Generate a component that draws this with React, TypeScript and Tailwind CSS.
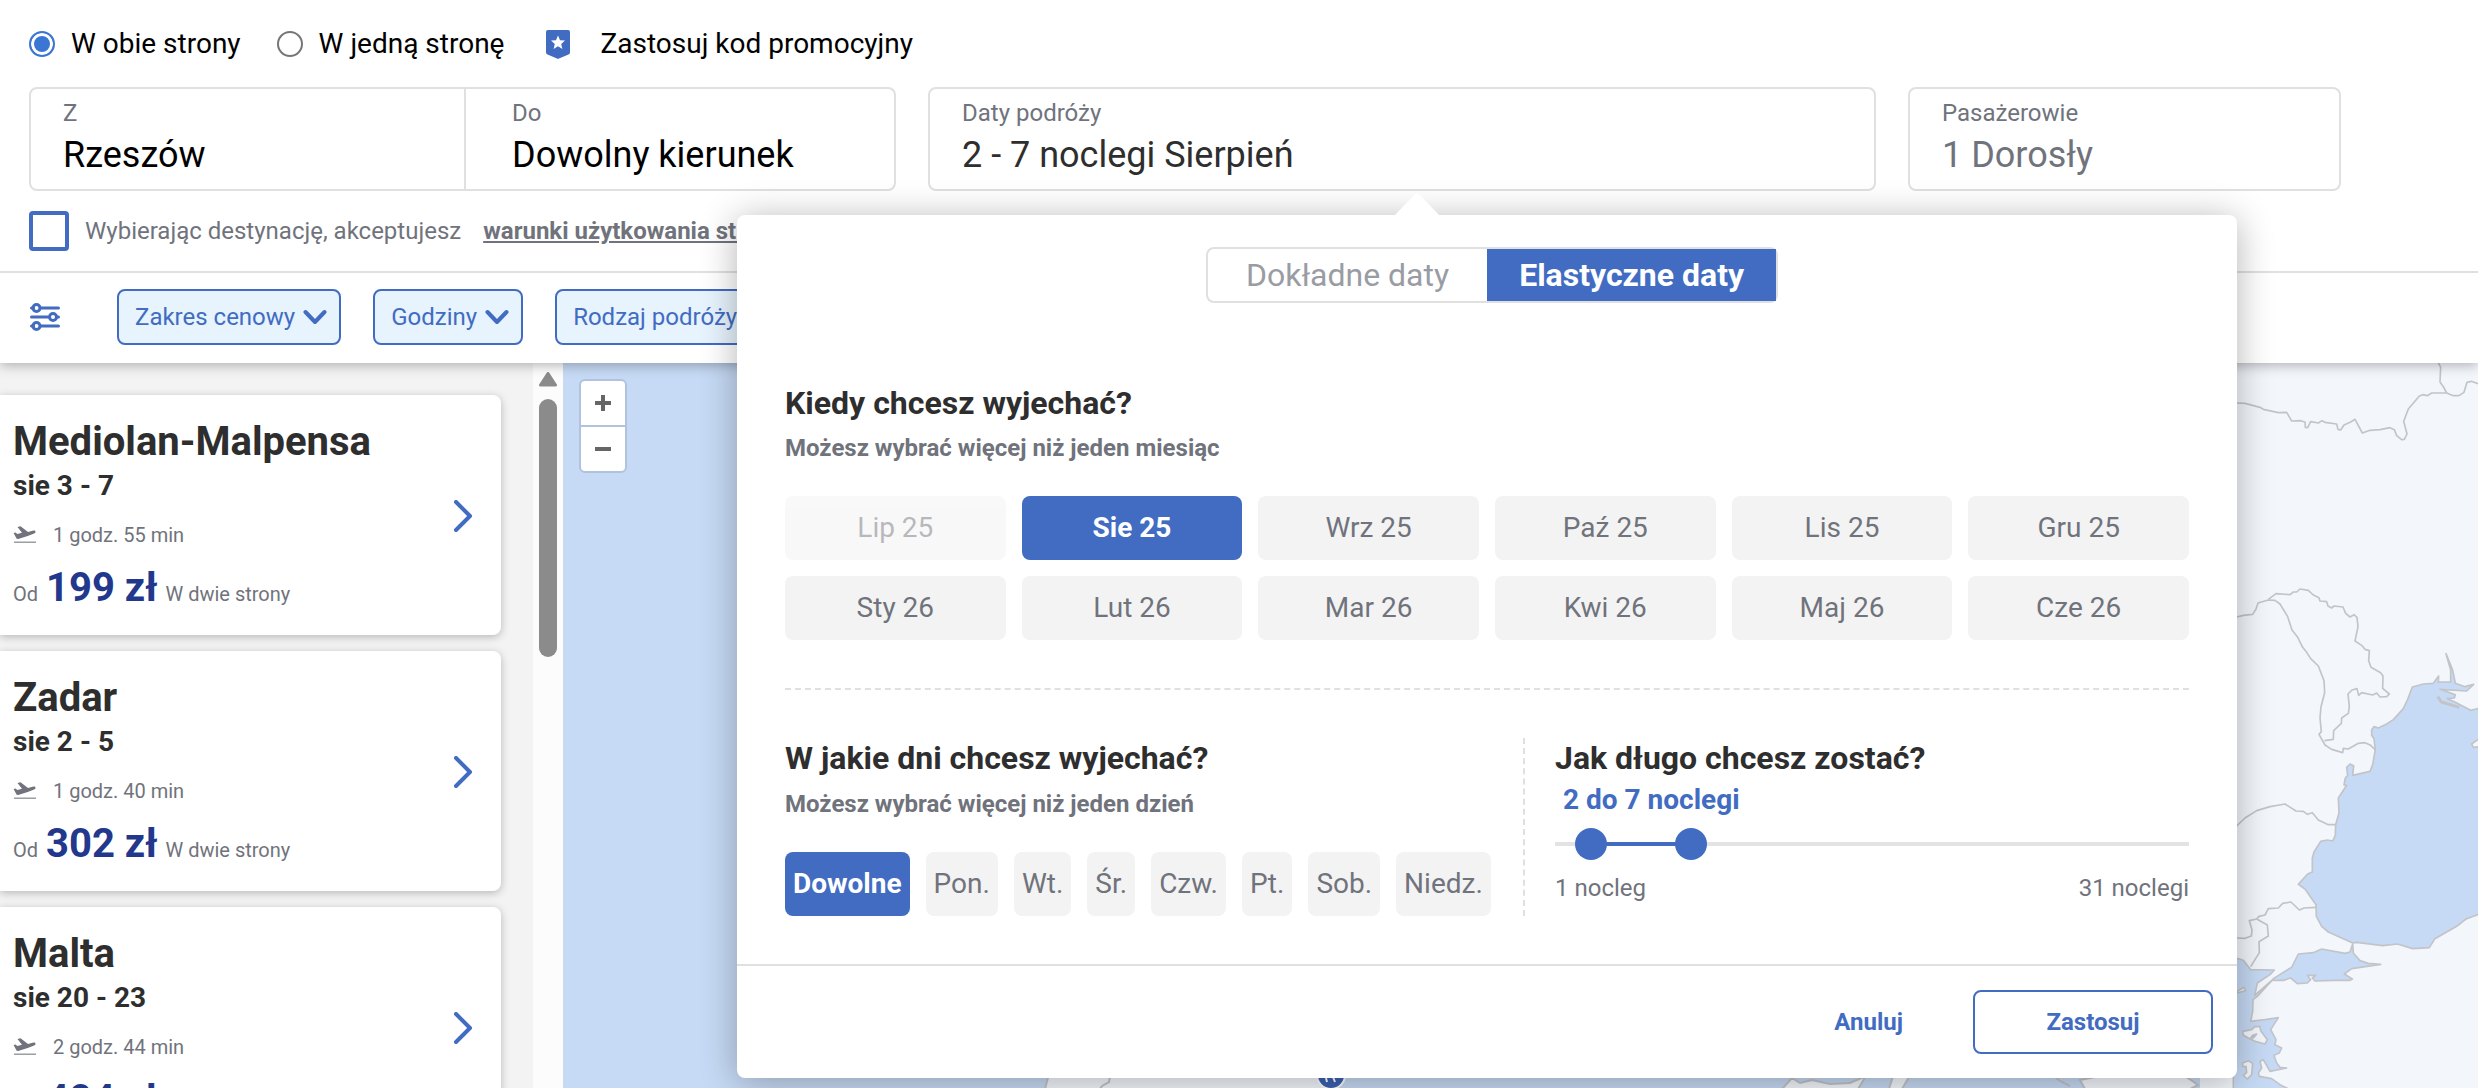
import { useState } from 'react'
import type { ReactNode } from 'react'

const MONTHS = ['Lip 25', 'Sie 25', 'Wrz 25', 'Paź 25', 'Lis 25', 'Gru 25', 'Sty 26', 'Lut 26', 'Mar 26', 'Kwi 26', 'Maj 26', 'Cze 26']
const DAYS = ['Dowolne', 'Pon.', 'Wt.', 'Śr.', 'Czw.', 'Pt.', 'Sob.', 'Niedz.']
const MIN_NIGHTS = 1
const MAX_NIGHTS = 31

type Trip = {
  city: string
  dates: string
  duration: string
  price: string
}

const TRIPS: Trip[] = [
  { city: 'Mediolan-Malpensa', dates: 'sie 3 - 7', duration: '1 godz. 55 min', price: '199 zł' },
  { city: 'Zadar', dates: 'sie 2 - 5', duration: '1 godz. 40 min', price: '302 zł' },
  { city: 'Malta', dates: 'sie 20 - 23', duration: '2 godz. 44 min', price: '404 zł' },
]

function PromoIcon() {
  return (
    <svg viewBox="0 0 24 29" className="h-[29px] w-6" aria-hidden="true">
      <path d="M2 0h20a2 2 0 0 1 2 2v20.500q0 1.500-1.500 2L13 28.600q-1 .4-2 0l-9.500-4.100Q0 24 0 22.500V2a2 2 0 0 1 2-2z" fill="#416cc2" />
      <path d="M12 5.500l2 4.700 5 .4-3.800 3.300 1.200 5L12 16.200l-4.400 2.700 1.200-5L5 10.600l5-.4z" fill="#fff" />
    </svg>
  )
}

function SlidersIcon() {
  return (
    <svg viewBox="0 0 30 28" className="h-7 w-[30px]" fill="none" stroke="#416cc2" strokeWidth="3" strokeLinecap="round" aria-hidden="true">
      <path d="M1.500 5h2M11 5h17.500M1.500 14h16.500M27 14h1.500M1.500 23h2M11 23h17.500" />
      <circle cx="6.500" cy="5" r="3.500" />
      <circle cx="23" cy="14" r="3.500" />
      <circle cx="6.500" cy="23" r="3.500" />
    </svg>
  )
}

function TakeoffIcon() {
  return (
    <svg viewBox="0 0 24 24" className="size-6" fill="currentColor" aria-hidden="true">
      <path d="M22.570 8.640c-.3-.9-1.200-1.300-2-1.100L15 9 7.500 3.300l-3 .6L9 9.800l-4.600 1.200-2-1.500-1.800.4 2.900 5.600q.6.700 1.700.4 9-2.200 16-5.300 1.700-.8 1.400-2z" />
      <path d="M1 18.500h22V20H1z" opacity="0.700" />
    </svg>
  )
}

function FilterButton({ children }: { children: ReactNode }) {
  return (
    <button className="flex h-14 items-center gap-2 rounded-lg border-2 border-[#416cc2] bg-[#e7f3fd] pr-3 pl-4 text-2xl whitespace-nowrap text-[#416cc2]">
      {children}
      <svg viewBox="0 0 24 16" className="h-4 w-6" fill="none" stroke="#416cc2" strokeWidth="4" strokeLinecap="round" strokeLinejoin="round" aria-hidden="true">
        <path d="M2.500 3L12 13l9.500-10" />
      </svg>
    </button>
  )
}

function TextField({ id, label, value, className }: { id: string; label: string; value: string; className: string }) {
  return (
    <div className={`min-w-0 pt-2 pb-2.5 ${className}`}>
      <label htmlFor={id} className="block text-2xl leading-8 text-[#70737c]">
        {label}
      </label>
      <input id={id} defaultValue={value} className="mt-0.5 block h-12 w-full bg-transparent text-4xl text-inherit outline-none" />
    </div>
  )
}

function TripCard({ trip }: { trip: Trip }) {
  return (
    <a href="#trip" className="flex items-center justify-between rounded-r-lg bg-white pt-6 pr-7 pb-[22px] pl-[13px] shadow-[0_2px_8px_rgba(0,0,0,0.25)]">
      <div>
        <h2 className="text-[40px] leading-[46px] font-bold text-[#2e2e2e]">{trip.city}</h2>
        <p className="text-[28px] leading-[42px] font-bold text-[#2e2e2e]">{trip.dates}</p>
        <p className="mt-4 flex items-center gap-4 text-xl leading-6 text-[#70737c]">
          <TakeoffIcon />
          {trip.duration}
        </p>
        <p className="mt-4 flex items-baseline gap-2 text-xl text-[#70737c]">
          Od
          <strong className="text-[40px] leading-[50px] font-bold text-[#22388c]">{trip.price}</strong>
          W dwie strony
        </p>
      </div>
      <svg viewBox="0 0 20 32" className="h-8 w-5" fill="none" stroke="#416cc2" strokeWidth="4" strokeLinecap="round" strokeLinejoin="round" aria-hidden="true">
        <path d="M3 2l14 14L3 30" />
      </svg>
    </a>
  )
}

function MapCanvas() {
  return (
    <svg viewBox="563 363 1915 725" preserveAspectRatio="xMaxYMin slice" className="absolute inset-0 h-full w-full bg-[#c6daf5]" aria-hidden="true">
      <rect x="2200" y="363" width="278" height="725" fill="#f3f7fc" />
      <g fill="#f3f7fc" stroke="#c2c4c8" strokeWidth="2">
        <path d="M1050 1070L1045 1089H1325L1330 1070Z" />
        <path d="M1111 1070L1109 1082L1102 1086L1100 1089" fill="none" />
        <path d="M1782 1089L1792 1078L1800 1083L1812 1080L1830 1084L1850 1083L1866 1076L1858 1089Z" />
        <path d="M1893 1076L1889 1089H1902L1909 1077Z" />
        <path d="M2056 1078L2062 1082L2070 1086M2085 1089L2080 1080L2100 1076H2185L2198 1085L2190 1089Z" />
      </g>
      <circle cx="1331" cy="1075" r="14" fill="#3c62b4" stroke="#fff" strokeWidth="2" />
      <path d="M1326 1078l1 4M1333 1077l2 5" stroke="#fff" strokeWidth="2" />
      <g transform="translate(2220 350) scale(0.333333)" stroke="#c2c4c8" strokeWidth="5" strokeLinejoin="round" fill="none">
        {/* borders */}
        <path d="M50 159L75 160L120 172L130 178L175 188L200 187L215 213L240 212L255 216L256 232L263 233L272 215L295 219L306 212L315 217L350 222L354 238L362 240L372 225L392 216L405 208L427 249L450 241L480 239L510 233L523 239L530 257L545 269L553 268L561 252L551 214L565 177L598 138L609 134L622 137L635 129L680 129L700 137H717L732 127L741 97L754 94L774 101" />
        <path d="M654 36L662 52L660 96L670 110L680 129" />
        <path d="M50 801L70 796L98 793L108 777L114 759L145 750L165 751L180 762L203 800L216 840L232 860L248 892L260 907L272 926L295 948L312 992L314 1028L303 1070L300 1104L304 1145L297 1153L315 1185L335 1198L368 1208L370 1195L385 1197L415 1180L435 1178L452 1186L466 1200" />
        <path d="M145 748L168 731L210 734L220 726L230 726L240 717L265 721L280 735L297 743L300 753L320 755L324 768L335 774L342 768L369 771L377 790L390 801L402 794L411 802L414 830L405 873L425 886L435 898L448 902L446 932L453 952L482 968L489 978L488 1015L508 1032L500 1040L480 1041L470 1029L458 1035L425 1028L416 1036L411 1016L396 1020L384 1032L388 1070L385 1090L365 1104L364 1120L341 1142L340 1168L313 1172" />
        <path d="M50 1428L75 1404L110 1382L150 1370L195 1362L228 1383L250 1384L262 1393L277 1388L295 1410L325 1424H347" />
        <path d="M50 1764L75 1765L94 1758L96 1740L88 1712L110 1707L117 1699L135 1695L145 1676L175 1674L188 1660L213 1656L238 1680L252 1674L288 1672" />
        <path d="M110 1707L142 1725L145 1758L117 1775L118 1808L92 1850" />
        {/* Black Sea */}
        <path
          fill="#c6daf5"
          d="M780 1074L752 1081L703 1055L682 1046L703 1044L706 1034L690 1028L660 1018L740 1023L761 1003L735 1010L706 1000L698 960L678 911L692 960V996L655 996L656 978L640 1000L610 1002L577 1011L563 1048L550 1076L520 1109L500 1122L475 1134L462 1130L455 1139V1156L462 1166L466 1199L458 1244L450 1264L398 1276L401 1247L390 1242L380 1252L383 1276L376 1284L372 1305L380 1306L355 1344L357 1389L347 1424L346 1456L338 1473L322 1470L302 1474L282 1506L277 1524V1566L263 1572L235 1603L255 1617L288 1664L289 1699L305 1729L325 1746L398 1779L410 1777L488 1787L532 1782L578 1796L628 1793L645 1766L710 1729L738 1707L780 1692Z"
        />
        <path d="M653 1040L664 1056L718 1072" strokeWidth="9" />
        <path fill="#f3f7fc" d="M780 1164L755 1182L760 1192L780 1190" />
        {/* Marmara and Aegean */}
        <g transform="translate(0 1104)" fill="#c6daf5">
          <path d="M160 782L215 748L235 708L280 704L305 693L375 706L390 702L398 678L400 705L420 728L445 736L482 739L395 752L373 768L397 783L390 787H345L285 789L277 780L287 772L262 772L272 785L262 795L232 797L212 780L190 787H158Z" />
          <path d="M40 722H55L70 727L92 755L163 756L150 770L112 795L104 832L158 785L112 835L99 845L98 880L92 910L135 905L175 899L152 935L168 965L165 980L185 990L178 1005L162 1012L170 1035L180 1048L200 1050L150 1060L130 1025L120 1030L125 1050L115 1065L118 1075L155 1082L180 1100L212 1116H40Z" />
          <g fill="#f3f7fc">
            <path d="M52 820L72 808L77 818L52 825Z" />
            <path d="M68 940L95 935L105 925L120 926L122 938L142 965L135 978L105 970L85 960L70 952Z" />
            <path d="M92 960L98 952L110 948L100 960Z" fill="#c2c4c8" />
            <path d="M68 1035L85 1028L98 1036L95 1070L82 1083L70 1072L80 1064L78 1046L68 1045Z" />
          </g>
        </g>
      </g>
    </svg>
  )
}

function NightsSlider() {
  const [from, setFrom] = useState(2)
  const [to, setTo] = useState(7)
  const pos = (n: number) => ((n - MIN_NIGHTS) / (MAX_NIGHTS - MIN_NIGHTS)) * 100
  const rangeClass =
    'pointer-events-none absolute inset-0 h-8 w-full appearance-none bg-transparent [&::-webkit-slider-thumb]:pointer-events-auto [&::-webkit-slider-thumb]:size-8 [&::-webkit-slider-thumb]:appearance-none [&::-webkit-slider-thumb]:rounded-full [&::-webkit-slider-thumb]:bg-[#416cc2]'

  return (
    <div>
      <output className="mt-1.5 block pl-2 text-[28px] leading-8 font-bold text-[#416cc2]">
        {from} do {to} noclegi
      </output>
      <div className="relative mt-3 flex h-8 items-center bg-[linear-gradient(#e3e3e3,#e3e3e3)] bg-[length:100%_4px] bg-center bg-no-repeat px-4">
        <div className="h-1 w-full">
          <div className="h-full bg-[#416cc2]" style={{ marginLeft: `${pos(from)}%`, width: `${pos(to) - pos(from)}%` }} />
        </div>
        <input
          type="range"
          aria-label="Minimalna liczba noclegów"
          min={MIN_NIGHTS}
          max={MAX_NIGHTS}
          value={from}
          onChange={(e) => setFrom(Math.min(Number(e.target.value), to))}
          className={rangeClass}
        />
        <input
          type="range"
          aria-label="Maksymalna liczba noclegów"
          min={MIN_NIGHTS}
          max={MAX_NIGHTS}
          value={to}
          onChange={(e) => setTo(Math.max(Number(e.target.value), from))}
          className={rangeClass}
        />
      </div>
      <div className="mt-3 flex justify-between text-2xl leading-8 text-[#70737c]">
        <span>1 nocleg</span>
        <span>31 noclegi</span>
      </div>
    </div>
  )
}

function DatesPopup() {
  const [months, setMonths] = useState(['Sie 25'])
  const [day, setDay] = useState('Dowolne')

  function toggleMonth(month: string) {
    setMonths((prev) => (prev.includes(month) ? prev.filter((m) => m !== month) : [...prev, month]))
  }

  return (
    <div className="absolute top-[126px] -left-[193px] z-20 w-[1500px] rounded-lg bg-white shadow-[0_4px_36px_rgba(0,0,0,0.3)]">
      <svg viewBox="0 0 46 24" className="absolute -top-[23px] left-[657px] h-6 w-[46px]" aria-hidden="true">
        <path d="M0 24L20 3Q23 0 26 3L46 24Z" fill="#fff" />
      </svg>
      <div className="px-12 pt-8 pb-12">
        <div className="flex justify-center pl-2.5">
          <div className="flex h-14 rounded-lg border-2 border-[#e0e0e0] text-[32px]">
            <button className="px-[38px] text-[#9a9ca4]">Dokładne daty</button>
            <button className="bg-[#416cc2] px-8 font-bold text-white">Elastyczne daty</button>
          </div>
        </div>

        <h3 className="mt-20 text-[32px] leading-10 font-bold text-[#2e2e2e]">Kiedy chcesz wyjechać?</h3>
        <p className="mt-[9px] text-2xl leading-8 font-bold text-[#70737c]">Możesz wybrać więcej niż jeden miesiąc</p>
        <div className="mt-8 grid grid-cols-6 gap-4">
          {MONTHS.map((month, i) => (
            <button
              key={month}
              disabled={i === 0}
              onClick={() => toggleMonth(month)}
              className={
                months.includes(month)
                  ? 'h-16 rounded-lg bg-[#416cc2] text-[28px] font-bold text-white'
                  : 'h-16 rounded-lg bg-[#f3f3f3] text-[28px] text-[#70737c] disabled:opacity-50'
              }
            >
              {month}
            </button>
          ))}
        </div>

        <div className="mt-12 flex border-t-2 border-dashed border-[#e0e0e0] pt-12">
          <div className="w-[738px]">
            <h3 className="text-[32px] leading-10 font-bold text-[#2e2e2e]">W jakie dni chcesz wyjechać?</h3>
            <p className="mt-2.5 text-2xl leading-8 font-bold text-[#70737c]">Możesz wybrać więcej niż jeden dzień</p>
            <div className="mt-8 flex gap-4">
              {DAYS.map((d) => (
                <button
                  key={d}
                  onClick={() => setDay(d)}
                  className={
                    d === day
                      ? 'h-16 rounded-lg bg-[#416cc2] px-2 text-[28px] font-bold text-white'
                      : 'h-16 rounded-lg bg-[#f3f3f3] px-2 text-[28px] text-[#70737c]'
                  }
                >
                  {d}
                </button>
              ))}
            </div>
          </div>
          <div className="flex-1 border-l-2 border-dashed border-[#e0e0e0] pl-[30px]">
            <h3 className="text-[32px] leading-10 font-bold text-[#2e2e2e]">Jak długo chcesz zostać?</h3>
            <NightsSlider />
          </div>
        </div>
      </div>
      <div className="flex justify-end gap-12 border-t-2 border-[#e0e0e0] p-6 text-2xl font-bold text-[#416cc2]">
        <button className="px-[22px]">Anuluj</button>
        <button className="h-16 w-60 rounded-lg border-2 border-[#416cc2]">Zastosuj</button>
      </div>
    </div>
  )
}

function SearchHeader() {
  const [trip, setTrip] = useState('round')
  const radioClass =
    'size-[26px] appearance-none rounded-full border-2 border-[#767676] checked:border-[#3b76d4] checked:bg-[#3b76d4] checked:shadow-[inset_0_0_0_3px_#fff]'

  return (
    <header className="relative z-10 bg-white shadow-[0_2px_12px_rgba(0,0,0,0.3)]">
      <div className="border-b-2 border-[#e0e0e0] pt-7 pr-[137px] pb-5 pl-[29px]">
        <div className="flex h-8 items-center text-[28px] text-black">
          <input id="round" type="radio" name="trip" checked={trip === 'round'} onChange={() => setTrip('round')} className={radioClass} />
          <label htmlFor="round" className="pr-9 pl-4">
            W obie strony
          </label>
          <input id="oneway" type="radio" name="trip" checked={trip === 'oneway'} onChange={() => setTrip('oneway')} className={radioClass} />
          <label htmlFor="oneway" className="pr-[42px] pl-4">
            W jedną stronę
          </label>
          <button className="flex items-center gap-[30px]">
            <PromoIcon />
            Zastosuj kod promocyjny
          </button>
        </div>

        <div className="mt-[27px] grid grid-cols-[867fr_948fr_433fr] gap-8">
          <div className="grid grid-cols-[435fr_428fr] rounded-lg border-2 border-[#e0e0e0] text-black">
            <TextField id="from" label="Z" value="Rzeszów" className="border-r-2 border-[#e0e0e0] pl-8" />
            <TextField id="to" label="Do" value="Dowolny kierunek" className="pl-[46px]" />
          </div>
          <div className="relative rounded-lg border-2 border-[#e0e0e0] text-[#2e2e2e]">
            <TextField id="dates" label="Daty podróży" value="2 - 7 noclegi Sierpień" className="pl-8" />
            <DatesPopup />
          </div>
          <div className="rounded-lg border-2 border-[#e0e0e0] text-[#70737c]">
            <TextField id="passengers" label="Pasażerowie" value="1 Dorosły" className="pl-8" />
          </div>
        </div>

        <div className="mt-5 flex h-10 items-center text-2xl text-[#70737c]">
          <input id="terms" type="checkbox" className="size-10 appearance-none rounded border-4 border-[#416cc2] checked:bg-[#416cc2]" />
          <label htmlFor="terms" className="pr-[22px] pl-4">
            Wybierając destynację, akceptujesz
          </label>
          <a href="#terms" className="font-bold underline">
            warunki użytkowania strony
          </a>
        </div>
      </div>

      <div className="flex items-center gap-8 pt-4 pb-[18px] pl-[30px]">
        <button aria-label="Filtry" className="mr-[25px]">
          <SlidersIcon />
        </button>
        <FilterButton>Zakres cenowy</FilterButton>
        <FilterButton>Godziny</FilterButton>
        <FilterButton>Rodzaj podróży</FilterButton>
      </div>
    </header>
  )
}

export default function App() {
  return (
    <div className="flex h-screen flex-col overflow-hidden bg-white font-['Roboto',sans-serif]">
      <SearchHeader />
      <main className="flex min-h-0 flex-1">
        <aside className="flex w-[563px] shrink-0 overflow-hidden bg-[#f3f3f3]">
          <div className="flex flex-1 flex-col gap-4 pt-8 pr-8">
            {TRIPS.map((trip) => (
              <TripCard key={trip.city} trip={trip} />
            ))}
          </div>
          <div className="flex w-[30px] flex-col items-center gap-3 bg-[#fcfcfc] pt-2">
            <svg viewBox="0 0 18 16" className="h-4 w-[18px]" aria-hidden="true">
              <path d="M9 2.500L16.500 14H1.500Z" fill="#8b8b8b" stroke="#8b8b8b" strokeWidth="3" strokeLinejoin="round" />
            </svg>
            <div className="h-[258px] w-[18px] rounded-full bg-[#8b8b8b]" />
          </div>
        </aside>
        <section className="relative flex-1 overflow-hidden">
          <MapCanvas />
          <div className="absolute top-4 left-4 flex flex-col gap-0.5 rounded-md border-2 border-[#b0c2dd] bg-[#b0c2dd] text-[#666666]">
            <button aria-label="Przybliż" className="flex h-11 w-11 items-center justify-center rounded-t bg-white">
              <svg viewBox="0 0 16 16" className="size-4" aria-hidden="true">
                <path d="M8 0v16M0 8h16" stroke="currentColor" strokeWidth="4" />
              </svg>
            </button>
            <button aria-label="Oddal" className="flex h-11 w-11 items-center justify-center rounded-b bg-white">
              <svg viewBox="0 0 16 16" className="size-4" aria-hidden="true">
                <path d="M0 8h16" stroke="currentColor" strokeWidth="4" />
              </svg>
            </button>
          </div>
        </section>
      </main>
    </div>
  )
}
